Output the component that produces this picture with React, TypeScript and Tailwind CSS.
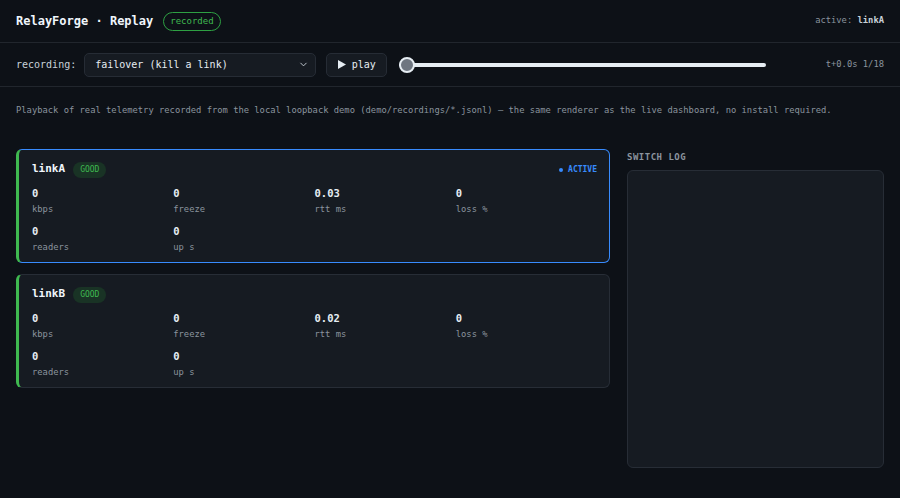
import { ChevronDown } from "lucide-react";

type Link = {
  name: string;
  active: boolean;
  rtt: string;
};

const links: Link[] = [
  { name: "linkA", active: true, rtt: "0.03" },
  { name: "linkB", active: false, rtt: "0.02" },
];

function Metric({ value, label }: { value: string; label: string }) {
  return (
    <div className="flex flex-col">
      <span className="text-[10.5px] font-bold leading-[14px] text-[#e6edf3]">{value}</span>
      <span className="mt-[3px] text-[8.8px] leading-[12px] text-[#8b949e]">{label}</span>
    </div>
  );
}

function LinkCard({ link }: { link: Link }) {
  return (
    <div
      className={`rounded-[6px] border border-l-[3px] bg-[#161b22] pb-[9px] pl-[13px] pr-[12px] pt-[11px] ${
        link.active ? "border-[#388bfd] border-l-[#3fb950]" : "border-[#272d36] border-l-[#3fb950]"
      }`}
    >
      <div className="flex h-[17px] items-center">
        <span className="text-[11px] font-bold text-[#f0f6fc]">{link.name}</span>
        <span className="ml-[8px] rounded-full bg-[#193325] px-[7px] py-[2px] text-[8px] leading-[12px] text-[#3fb950]">
          GOOD
        </span>
        {link.active && (
          <span className="ml-auto flex items-center gap-[5px] text-[8px] font-bold text-[#388bfd]">
            <span className="h-[4px] w-[4px] rounded-full bg-[#388bfd]" />
            ACTIVE
          </span>
        )}
      </div>
      <div className="mt-[8px] grid grid-cols-4 gap-y-[9px]">
        <Metric value="0" label="kbps" />
        <Metric value="0" label="freeze" />
        <Metric value={link.rtt} label="rtt ms" />
        <Metric value="0" label="loss %" />
        <Metric value="0" label="readers" />
        <Metric value="0" label="up s" />
      </div>
    </div>
  );
}

export default function App() {
  return (
    <div
      className="h-[498px] w-full overflow-hidden bg-[#0d1117] text-[#e6edf3]"
      style={{ fontFamily: '"DejaVu Sans Mono", "Liberation Mono", monospace' }}
    >
      {/* Header */}
      <div className="flex h-[43px] items-center border-b border-[#21262d] px-[16px]">
        <span className="text-[12px] font-bold text-[#f0f6fc]">RelayForge · Replay</span>
        <span className="ml-[10px] rounded-full border border-[#2ea043] px-[6px] py-[2px] text-[9px] leading-[13px] text-[#3fb950]">
          recorded
        </span>
        <span className="ml-auto text-[8.8px] text-[#8b949e]">
          active: <b className="text-[#c9d1d9]">linkA</b>
        </span>
      </div>

      {/* Controls */}
      <div className="flex h-[44px] items-center border-b border-[#21262d] px-[16px]">
        <span className="text-[10px] text-[#c9d1d9]">recording:</span>
        <div className="ml-[8px] flex h-[24px] w-[232px] items-center rounded-[5px] border border-[#262c35] bg-[#161b22] pl-[10px] pr-[6px]">
          <span className="text-[10px] text-[#e6edf3]">failover (kill a link)</span>
          <ChevronDown className="ml-auto text-[#c9d1d9]" size={11} strokeWidth={2} />
        </div>
        <div className="ml-[10px] flex h-[24px] w-[61px] items-center justify-center gap-[6px] rounded-[5px] border border-[#262c35] bg-[#161b22]">
          <svg width="8" height="9" viewBox="0 0 8 9">
            <polygon points="0,0 8,4.5 0,9" fill="#e6edf3" />
          </svg>
          <span className="text-[10px] text-[#e6edf3]">play</span>
        </div>
        <div className="relative ml-[12px] flex h-[16px] w-[367px] items-center">
          <div className="h-[4px] w-full rounded-full bg-[#e6edf3]" />
          <div className="absolute left-0 top-0 h-[16px] w-[16px] rounded-full border-2 border-[#e6edf3] bg-[#6e7681]" />
        </div>
        <span className="ml-auto text-[8.8px] text-[#8b949e]">t+0.0s 1/18</span>
      </div>

      {/* Description */}
      <div className="px-[16px] pt-[17px] text-[8.8px] leading-[12px] text-[#8b949e]">
        Playback of real telemetry recorded from the local loopback demo (demo/recordings/*.jsonl) — the same
        renderer as the live dashboard, no install required.
      </div>

      {/* Main */}
      <div className="mt-[33px] grid grid-cols-[1fr_257px] gap-[17px] px-[16px]">
        <div className="flex flex-col gap-[11px]">
          {links.map((l) => (
            <LinkCard key={l.name} link={l} />
          ))}
        </div>
        <div className="flex flex-col">
          <span className="mt-[2px] text-[9px] font-bold leading-[12px] tracking-[0.5px] text-[#8b949e]">
            SWITCH LOG
          </span>
          <div className="mt-[7px] h-[298px] rounded-[6px] border border-[#272d36] bg-[#161b22]" />
        </div>
      </div>
    </div>
  );
}
